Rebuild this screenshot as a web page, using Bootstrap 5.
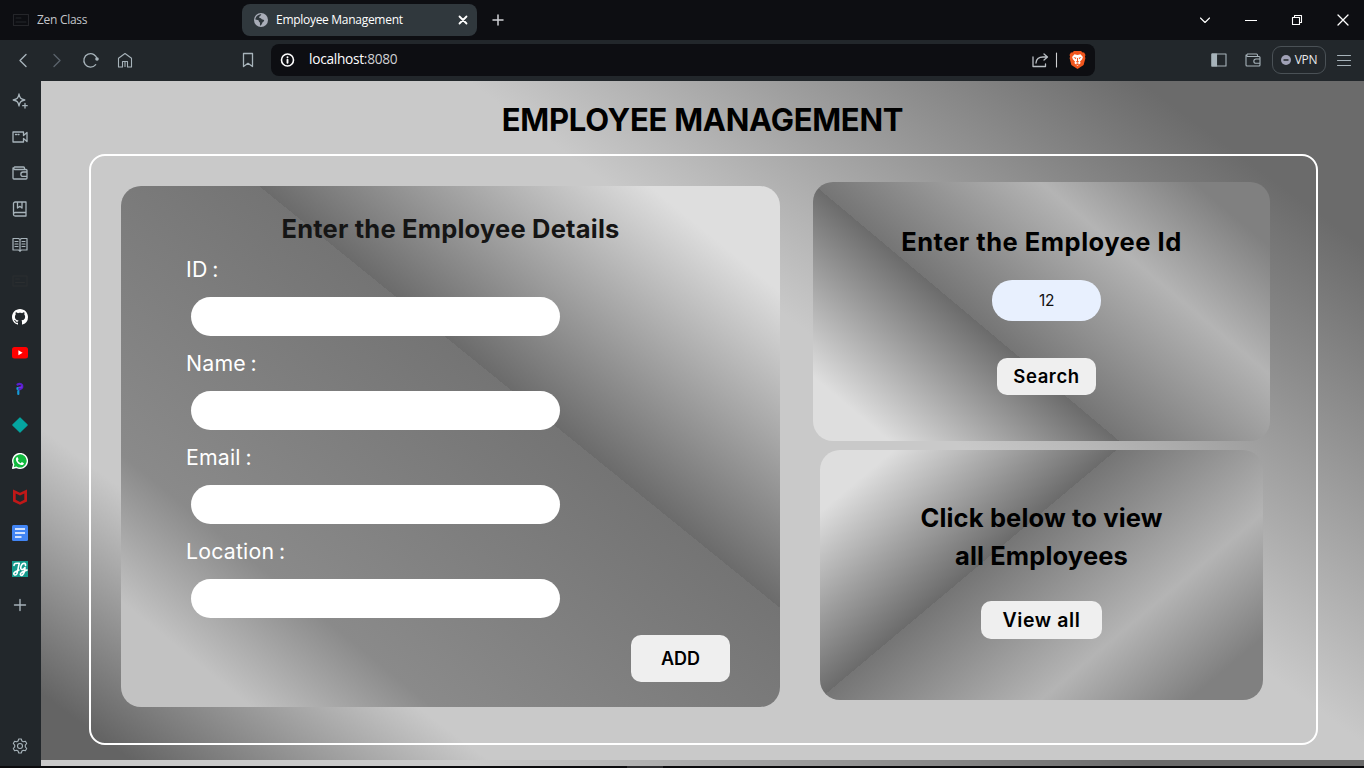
<!DOCTYPE html>
<html lang="en">
<head>
<meta charset="utf-8">
<meta name="viewport" content="width=device-width, initial-scale=1">
<title>Employee Management</title>
<link rel="stylesheet" href="https://cdn.jsdelivr.net/npm/bootstrap@5.3.0/dist/css/bootstrap.min.css">
<style>
  body{width:1364px;height:768px;background:#0d0e12;font-family:"Open Sans","Noto Sans",sans-serif;color:#fff}
  svg{display:block;flex:none;fill:none;stroke:currentColor;stroke-width:1.1;stroke-linecap:round;stroke-linejoin:round}
  svg.solid{stroke:none}
  /* browser frame */
  .tabstrip{height:40px;background:#0d0e12;font-size:12px}
  .tab-idle{width:229px;color:#c3c5c9}
  .tab-active{width:235px;height:32px;background:#30383d;border-radius:8px}
  .tab-label{letter-spacing:-.29px}
  .win-controls{gap:30px;margin-right:15px}
  .toolbar{height:41px;padding-bottom:2px;background:#22272b;color:#a7b3ba}
  .address{width:824px;height:32px;background:#0d0e12;border-radius:8px;font-size:13.7px;color:#cfd0d2}
  .address .url{letter-spacing:-.28px;margin-left:14px}
  .address b{font-weight:400;color:#fff}
  .vpn{width:54px;height:28px;border:1px solid #4a5156;border-radius:9px;font-size:12px;color:#e9eaec;letter-spacing:-.3px}
  .rail{width:41px;height:685px;padding:2px 2px 2px 0;background:#22272b;color:#a7b3ba}
  .rail-item{height:36px}
  /* page */
  .page{width:1323px;height:685px;font-family:Inter,"Open Sans",sans-serif;color:#000;
    background-image:linear-gradient(36.5deg,#646464 4%,#c9c9c9 20%,#c9c9c9 60%,#6b6b6b 90%);background-size:100% 679px}
  .page h1{height:73px;padding-top:4px;font-size:31px;font-weight:700;letter-spacing:-.25px}
  .frame{width:1229px;height:591px;margin-left:48px;border:2px solid #fff;border-radius:16px;padding:26px 46px 0 30px}
  .panel-add{width:659px;height:521px;margin-top:4px;border-radius:20px;padding:28px 50px 25px 65px;
    background:linear-gradient(39deg,#c2c2c2 10%,#8a8a8a 24%,#747474 60%,#6b6b6b 60%,#dedede 90%)}
  .panel-title{font-size:25.5px;line-height:30px;font-weight:700;margin:0}
  .panel-add .panel-title{color:#151515;margin-left:-15px;width:559px;text-align:center;letter-spacing:.2px}
  .field label{display:block;height:53px;padding-top:10px;font-size:21.3px;line-height:31px;letter-spacing:.2px;word-spacing:-1.5px;color:#fff}
  .field input{display:block;width:369px;height:39px;margin-left:5px;margin-bottom:2px;border:0;border-radius:20px;background:#fff}
  .btn-soft{background:#efefef;border:0;border-radius:10px;color:#000;font-weight:600;padding:0}
  .panel-find{width:457px;height:259px;border-radius:20px;padding-top:45px;
    background:linear-gradient(40deg,#dedede 10%,#6b6b6b 40%,#757575 40%,#b4b4b4 70%,#808080 90%)}
  .panel-find .panel-title{letter-spacing:.5px}
  .panel-find input{width:109px;height:41px;margin:23px 0 37px 10px;border:0;border-radius:20px;background:#e8f0fe;font-size:15.500px;text-align:center;color:#111;letter-spacing:-.5px}
  .panel-all{width:443px;height:250px;margin-top:9px;border-radius:20px;padding-top:49px;
    background:linear-gradient(140deg,#dedede 10%,#6b6b6b 40%,#757575 40%,#b4b4b4 70%,#808080 90%)}
  .panel-all .panel-title{line-height:38px;letter-spacing:.15px}
  .bottom-edge{height:2px;background:#0b0b0d}
  .bottom-edge div{width:36px;height:2px;margin-left:627px;background:#2c2c2e}
</style>
</head>
<body class="overflow-hidden">
<header>
  <div class="tabstrip d-flex align-items-center">
    <div class="tab-idle d-flex align-items-center ms-2 ps-1">
      <svg width="17" height="14" style="color:#25262a"><path d="M1.500 1.500h15v11h-15zM4 5h5M4 9h10"/></svg>
      <span class="tab-label ms-2">Zen Class</span>
    </div>
    <div class="tab-active d-flex align-items-center px-2" style="margin-left:5px">
      <svg class="solid ms-1" width="14" height="14" viewBox="0 0 14 14"><circle cx="7" cy="7" r="7" fill="#a9adb8"/><path fill="#30383d" d="M7.500 1.300C6.500 2 6.800 3.300 5.500 3.500 4.700 3.700 5 5 6 5c1.500.1 1.300 1.400 2.500 1.500 1.400.1 2 .5 1.500 1.600-.5 1-1.500.9-1.700 1.900-.2 1-.8 1.700-1.800 2.700C5.700 12.400 6 11 6 10c0-1-1.200-.9-1.200-2C4.700 7 3 7.300 1.300 6.600 1.700 3.600 4 1.300 7.500 1.300Z"/></svg>
      <span class="tab-label ms-2">Employee Management</span>
      <svg class="ms-auto" width="12" height="12" style="stroke-width:1.8"><path d="M2.500 2.500l7 7M9.500 2.500l-7 7"/></svg>
    </div>
    <svg style="margin-left:15px;color:#cfd1d5" width="12" height="12"><path d="M6 1v10M1 6h10" stroke-width="1.500"/></svg>
    <div class="win-controls d-flex align-items-center ms-auto">
      <svg width="12" height="16"><path d="M1.500 6l4.500 4.500L10.500 6"/></svg>
      <svg class="ms-1" width="12" height="16"><path d="M1 8.500h10" shape-rendering="crispEdges"/></svg>
      <svg class="ms-1" width="12" height="12"><path d="M1.500 3.500h7v7h-7zM3.500 3V1.500h7v7H9"/></svg>
      <svg class="ms-1" width="12" height="12"><path d="M1 1l10 10M11 1L1 11" stroke-width="1.300"/></svg>
    </div>
  </div>
  <div class="toolbar d-flex align-items-center">
    <svg style="margin-left:18px" width="12" height="16"><path d="M8 2.500L2 8.500l6 6" stroke-width="1.400"/></svg>
    <svg style="margin-left:22px;color:#59626a" width="12" height="16"><path d="M2 2.500l6 6-6 6" stroke-width="1.400"/></svg>
    <svg style="margin-left:18px" width="18" height="16"><path d="M13.700 12.700A6.700 6.700 0 1 1 15.200 7.500" stroke-width="1.300"/><circle cx="15" cy="7" r="1.800" fill="currentColor" stroke="none"/></svg>
    <svg style="margin-left:17px" width="16" height="16"><path d="M1.500 6.300L8 1.500l6.500 4.800V15h-4V9.500h-5V15h-4zM8 10v4.500"/></svg>
    <svg style="margin-left:108px" width="14" height="16"><path d="M2.500 1.500h9v13L7 11.300l-4.500 3.200z" stroke-width="1.300"/></svg>
    <div class="address d-flex align-items-center" style="margin-left:16px">
      <svg style="margin-left:9px;color:#fff" width="15" height="16"><circle cx="7.500" cy="8" r="6" stroke-width="1.600"/><path d="M7.500 7.700v3M7.500 5.100v.1" stroke-width="1.900"/></svg>
      <span class="url"><b>localhost</b>:8080</span>
      <svg class="ms-auto" width="17" height="16" style="color:#b9bec3"><path d="M1 5v9.500h12.500V12M4 11c.3-4 3-6 7-6h4M12 2l3.500 3-3.500 3" stroke-width="1.300"/></svg>
      <svg style="margin:0 11px 0 6px" width="3" height="18"><path d="M1.500 2v14"/></svg>
      <svg class="solid" style="margin-right:9px" width="17" height="20" viewBox="0 0 17 20"><path fill="#f1561d" d="M5 1h7l1.600 1.600 1.500-.1 1.400 2.400-.6 1.700.5 1.600-1.800 6.800L8.500 19 2.400 15 .6 8.200l.5-1.600L.5 4.900l1.400-2.400 1.500.1z"/><path fill="#fff" d="M5.500 4.200l3 .7 3-.7 2.400 2.900-.8 2.200-2.200 2.400.8 1.300-3.200 3-3.200-3 .8-1.300-2.200-2.400-.8-2.200z"/><path fill="#f1561d" d="M4.400 7l3 .7-.7 1.600zM12.600 7l-3 .7.7 1.600zM8 8h1v3l1.300.8-1.800 1-1.800-1L8 11zM6.300 14.300l2.200-1 2.200 1-2.200 1z"/></svg>
    </div>
    <svg style="margin-left:116px" width="16" height="14"><path d="M1 1h14v12H1z"/><path d="M1 1h4.500v12H1z" fill="currentColor"/></svg>
    <svg style="margin-left:18px" width="16" height="14"><path d="M12.500 3.500V2c0-.6-.4-1-1-1H2.500A1.500 1.500 0 0 0 2.500 3.500H14c.6 0 1 .4 1 1v7.500c0 .6-.4 1-1 1H2c-.6 0-1-.4-1-1V2M15 6h-4a2 2 0 0 0 0 4.300h4"/></svg>
    <div class="vpn d-flex align-items-center justify-content-center" style="margin-left:11px"><svg class="me-1" width="10" height="10"><circle cx="5" cy="5" r="5" fill="#a0a1b6" stroke="none"/><path d="M3 5h4" stroke="#22272b" stroke-width="1.400"/></svg>VPN</div>
    <svg style="margin-left:11px" width="14" height="12"><path d="M.5 1.500h13M.5 6.500h13M.5 11.500h13"/></svg>
  </div>
</header>
<div class="d-flex">
  <aside class="rail d-flex flex-column">
    <div class="rail-item d-flex align-items-center justify-content-center"><svg width="16" height="16"><path d="M7 1c.8 4.200 1.800 5.200 5.800 6-4 .8-5 1.800-5.800 6-.8-4.200-1.800-5.200-5.800-6C5.200 6.200 6.200 5.200 7 1zM13 10.500v4.500M10.700 12.700h4.500" stroke-width="1.300"/></svg></div>
    <div class="rail-item d-flex align-items-center justify-content-center"><svg width="16" height="12"><path d="M11.500 1H1v10h10.500V7.500L15 10.500V1.500L11.500 4.500zM3.500 3.500h1M6 3.500h1" stroke-width="1.300"/></svg></div>
    <div class="rail-item d-flex align-items-center justify-content-center"><svg width="16" height="14"><path d="M12.500 3.500V2c0-.6-.4-1-1-1H2.500A1.500 1.500 0 0 0 2.500 3.500H14c.6 0 1 .4 1 1v7.500c0 .6-.4 1-1 1H2c-.6 0-1-.4-1-1V2M15 6h-4a2 2 0 0 0 0 4.300h4" stroke-width="1.300"/></svg></div>
    <div class="rail-item d-flex align-items-center justify-content-center"><svg width="16" height="16"><path d="M14 11.500V1H3.200C2.300 1 1.500 1.600 1.500 2.500v11c0 .9.700 1.500 1.700 1.500H14v-3.500H3.200c-1 0-1.700.6-1.700 1.500M5.500 1v6l2.300-1.700L10 7V1" stroke-width="1.300"/></svg></div>
    <div class="rail-item d-flex align-items-center justify-content-center"><svg width="16" height="16"><path d="M8 2.500v12M1 1.500h5.500L8 2.500l1.500-1H15v11.500H9.500L8 14l-1.500-1H1zM3 4.500h3M3 7h3M3 9.500h3M10 4.500h3M10 7h3M10 9.500h3" stroke-width="1.200"/></svg></div>
    <div class="rail-item d-flex align-items-center justify-content-center"><svg width="16" height="12" style="color:#2b2e30"><path d="M1 1h14v10H1zM3.500 4h4M3.500 7.500h9"/></svg></div>
    <div class="rail-item d-flex align-items-center justify-content-center"><svg class="solid" width="16" height="16" viewBox="0 0 16 16"><path fill="#fff" d="M8 0C3.580 0 0 3.580 0 8c0 3.540 2.290 6.530 5.470 7.590.4.070.55-.17.55-.38 0-.19-.01-.82-.01-1.490-2.010.37-2.530-.49-2.690-.94-.09-.23-.48-.94-.82-1.130-.28-.15-.68-.52-.01-.53.63-.01 1.080.58 1.230.82.72 1.210 1.870.87 2.330.66.07-.52.28-.87.510-1.070-1.780-.2-3.640-.89-3.640-3.950 0-.87.310-1.590.82-2.150-.08-.2-.36-1.020.08-2.120 0 0 .67-.21 2.200.82.640-.18 1.320-.27 2-.27s1.360.09 2 .27c1.530-1.040 2.200-.82 2.200-.82.440 1.100.16 1.920.08 2.120.51.56.82 1.270.82 2.150 0 3.070-1.870 3.750-3.650 3.950.29.25.54.73.54 1.480 0 1.070-.01 1.930-.01 2.200 0 .21.15.46.55.38A8.010 8.010 0 0 0 16 8c0-4.420-3.580-8-8-8z"/></svg></div>
    <div class="rail-item d-flex align-items-center justify-content-center"><svg class="solid" width="16" height="12"><rect width="16" height="11.500" rx="2.500" fill="#f00"/><path d="M6.400 3.300v5l4.200-2.500z" fill="#fff"/></svg></div>
    <div class="rail-item d-flex align-items-center justify-content-center"><svg width="16" height="14"><path d="M5.500 2.500C8 1 10.800 2.500 10.300 5 10 6.700 8.500 7 7.300 7.500" stroke="#5b1fd0" stroke-width="2.200"/><path d="M6.800 5.500L9.500 5" stroke="#7a2cf0" stroke-width="1.500"/><path d="M5.500 6v1M6.300 9v3" stroke="#169bd8" stroke-width="2.200"/></svg></div>
    <div class="rail-item d-flex align-items-center justify-content-center"><svg width="16" height="16"><path d="M8 .8L15.200 8 8 15.200.8 8z" fill="#05a5a0" stroke="#05a5a0"/></svg></div>
    <div class="rail-item d-flex align-items-center justify-content-center"><svg width="16" height="16"><path d="M.7 15.300l1-3.800A7.300 7.300 0 1 1 4.500 14.300z" fill="#12b83e" stroke="#fff" stroke-width="1.400"/><path d="M5.500 4l1.100 2.200-.8 1.200c.7 1.300 1.600 2.200 3 2.800l1-1.100 2.100 1.100c0 1.200-1.200 2-2.400 1.800C6.500 11.600 4 8.800 3.900 6.300 3.900 5.200 4.700 4.200 5.500 4z" fill="#fff" stroke="none"/></svg></div>
    <div class="rail-item d-flex align-items-center justify-content-center"><svg class="solid" width="16" height="16"><path fill="#c01818" fill-rule="evenodd" d="M1 .5l7 3.200 7-3.200v12L8 15.800 1 12.500zM3.700 4.500v6.300L8 13l4.300-2.200V4.500L8 6.500z"/></svg></div>
    <div class="rail-item d-flex align-items-center justify-content-center"><svg width="16" height="16"><rect width="16" height="16" rx="1.500" fill="#4285f4" stroke="none"/><path d="M3 4h10M3 8h10M3 12h6.500" stroke="#fff" stroke-width="1.700" stroke-linecap="butt"/></svg></div>
    <div class="rail-item d-flex align-items-center justify-content-center"><svg width="16" height="16"><path d="M0 0h16v16H0z" fill="#139a8c" stroke="none"/><path d="M2 4.500C2 2 4 2.200 7.300 2.300 6.500 5 6 9 5 12.500 4 15 1 14 2 12c.8-1.500 3-2 5-3M13.500 4.500C14 2 11 1.500 9.500 4 8 7 9 9.500 11 8.300 12.500 7.500 12.500 6.500 13 6.500c0 3-1 6-2.500 7.500-1.500 1-3-.5-1.500-2S13.500 10 15 9" stroke="#fff" stroke-width="1.600"/></svg></div>
    <div class="rail-item d-flex align-items-center justify-content-center"><svg width="14" height="14"><path d="M7 1.500v11M1.500 7h11" stroke-width="1.400"/></svg></div>
    <div class="rail-item d-flex align-items-center justify-content-center mt-auto"><svg width="16" height="16"><path d="M6.700 1h2.600l.6 2 1.400.8 2.100-.5 1.300 2.200L13.300 7.100v1.800l1.400 1.600-1.300 2.200-2.100-.5-1.400.8-.6 2H6.700l-.6-2-1.400-.8-2.100.5-1.300-2.200 1.400-1.600V7.100L1.300 5.500l1.300-2.200 2.100.5L6.100 3z"/><circle cx="8" cy="8" r="2.500"/></svg></div>
  </aside>
  <main class="page">
    <h1 class="d-flex align-items-center justify-content-center m-0">EMPLOYEE MANAGEMENT</h1>
    <section class="frame d-flex justify-content-between">
      <form class="panel-add d-flex flex-column">
        <h2 class="panel-title">Enter the Employee Details</h2>
        <div class="field"><label for="eid">ID :</label><input id="eid" type="text"></div>
        <div class="field"><label for="ename">Name :</label><input id="ename" type="text"></div>
        <div class="field"><label for="email">Email :</label><input id="email" type="text"></div>
        <div class="field"><label for="eloc">Location :</label><input id="eloc" type="text"></div>
        <button type="button" class="btn btn-soft align-self-end mt-auto" style="width:99px;height:47px;font-size:18px">ADD</button>
      </form>
      <div class="d-flex flex-column align-items-center">
        <form class="panel-find d-flex flex-column align-items-center">
          <h2 class="panel-title">Enter the Employee Id</h2>
          <input type="text" value="12" aria-label="Employee Id">
          <button type="button" class="btn btn-soft" style="width:99px;height:37px;font-size:18.5px;letter-spacing:.6px;margin-left:10px">Search</button>
        </form>
        <div class="panel-all d-flex flex-column align-items-center">
          <h2 class="panel-title text-center">Click below to view<br>all Employees</h2>
          <button type="button" class="btn btn-soft" style="width:121px;height:38px;padding-top:1px;font-size:19.5px;letter-spacing:.6px;margin-top:26px">View all</button>
        </div>
      </div>
    </section>
  </main>
</div>
<div class="bottom-edge"><div></div></div>
<script src="https://cdn.jsdelivr.net/npm/bootstrap@5.3.0/dist/js/bootstrap.bundle.min.js"></script>
</body>
</html>
